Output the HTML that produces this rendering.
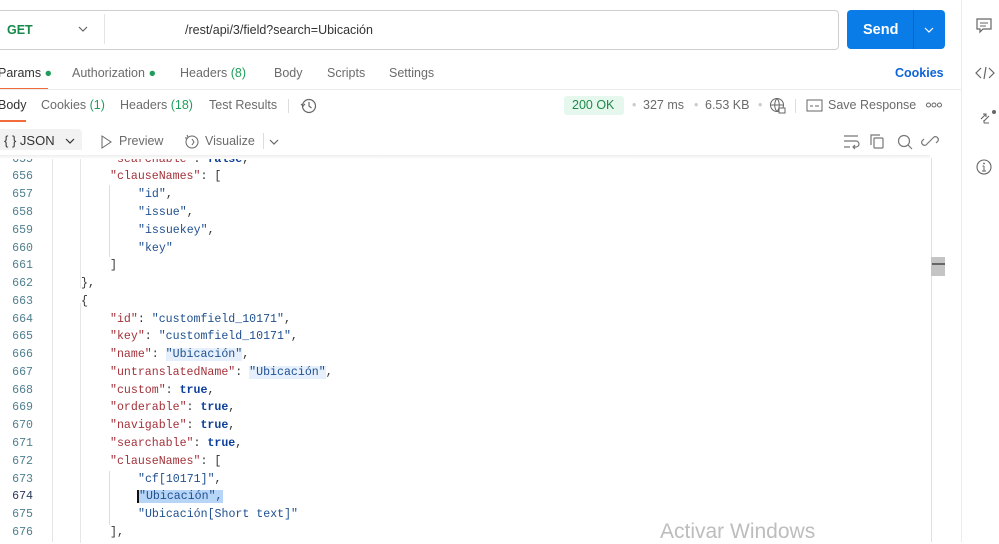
<!DOCTYPE html>
<html><head><meta charset="utf-8"><style>
*{margin:0;padding:0;box-sizing:border-box}
body{width:999px;height:542px;overflow:hidden;background:#fff;font-family:"Liberation Sans",sans-serif;position:relative;color:#6b6b6b}
.a{position:absolute;white-space:nowrap}
.t{font-size:12.5px}
.code{font-family:"Liberation Mono",monospace;font-size:11.6px}
.ln{position:absolute;left:0;width:33px;text-align:right;color:#4f7f8f;font-family:"Liberation Mono",monospace;font-size:11.6px}
.k{color:#a3323a}.s{color:#1f4f8f}.b{color:#0b3f9a;font-weight:bold}.p{color:#333}
.hl{background:#e5f0fc}
.g{color:#1e9e5a}
svg{position:absolute}
.cw{position:absolute;left:0;top:1px;width:930px;height:542px}
</style></head><body>
<div class="a" style="left:-5px;top:10px;width:844px;height:40px;border:1px solid #cfcfcf;border-radius:4px"></div>
<div class="a" style="left:104px;top:14px;width:1px;height:30px;background:#e4e4e4"></div>
<div class="a" style="left:7px;top:23px;font-size:12.5px;font-weight:bold;color:#158a4a">GET</div>
<svg style="left:78px;top:25px" width="10" height="8"><path d="M1 2l4 4 4-4" stroke="#666" fill="none" stroke-width="1.2"/></svg>
<div class="a" style="left:185px;top:23px;font-size:12.5px;color:#333">/rest/api/3/field?search=Ubicación</div>
<div class="a" style="left:847px;top:10px;width:98px;height:39px;background:#0a7ce8;border-radius:4px"></div>
<div class="a" style="left:913px;top:10px;width:1px;height:39px;background:#0668c5"></div>
<div class="a" style="left:863px;top:22px;font-size:14.5px;font-weight:bold;color:#fff">Send</div>
<svg style="left:924px;top:26px" width="10" height="8"><path d="M1 2l4 4 4-4" stroke="#fff" fill="none" stroke-width="1.2"/></svg>
<div class="a t" style="left:-2px;top:66px;color:#333">Params <span class="g">●</span></div>
<div class="a" style="left:0;top:88px;width:48px;height:2px;background:#f26b3a"></div>
<div class="a t" style="left:72px;top:66px">Authorization <span class="g">●</span></div>
<div class="a t" style="left:180px;top:66px">Headers <span class="g">(8)</span></div>
<div class="a t" style="left:274px;top:66px">Body</div>
<div class="a t" style="left:327px;top:66px">Scripts</div>
<div class="a t" style="left:389px;top:66px">Settings</div>
<div class="a t" style="left:895px;top:66px;color:#0d64d8;font-weight:bold">Cookies</div>
<div class="a" style="left:0;top:89px;width:961px;height:1px;background:#ececec"></div>
<div class="a t" style="left:-2px;top:98px;color:#333">Body</div>
<div class="a" style="left:0;top:120px;width:26px;height:2px;background:#f26b3a"></div>
<div class="a t" style="left:41px;top:98px">Cookies <span class="g">(1)</span></div>
<div class="a t" style="left:120px;top:98px">Headers <span class="g">(18)</span></div>
<div class="a t" style="left:209px;top:98px">Test Results</div>
<div class="a" style="left:288px;top:99px;width:1px;height:14px;background:#ddd"></div>
<svg style="left:300px;top:97px" width="18" height="18"><circle cx="9" cy="9" r="6.5" stroke="#666" fill="none" stroke-width="1.2"/><path d="M9 5v4l2.5 2" stroke="#666" fill="none" stroke-width="1.2"/><path d="M1 7l2 2 2-2" stroke="#666" fill="none" stroke-width="1.2"/></svg>
<div class="a" style="left:564px;top:96px;width:60px;height:19px;background:#e6f8ee;border-radius:3px"></div>
<div class="a t" style="left:572px;top:98px;color:#1e8a4a">200 OK</div>
<div class="a t" style="left:632px;top:98px;color:#ccc">•</div>
<div class="a t" style="left:643px;top:98px">327 ms</div>
<div class="a t" style="left:694px;top:98px;color:#ccc">•</div>
<div class="a t" style="left:705px;top:98px">6.53 KB</div>
<div class="a t" style="left:758px;top:98px;color:#ccc">•</div>
<svg style="left:769px;top:97px" width="18" height="18"><circle cx="8" cy="8" r="6.5" stroke="#666" fill="none"/><path d="M1.5 8h13M8 1.5c-3 3-3 10 0 13M8 1.5c3 3 3 10 0 13" stroke="#666" fill="none"/><rect x="10" y="11" width="6" height="5" fill="#fff" stroke="#666"/></svg>
<div class="a" style="left:795px;top:99px;width:1px;height:14px;background:#ddd"></div>
<svg style="left:806px;top:99px" width="18" height="14"><rect x="1" y="1" width="15" height="11" stroke="#666" fill="none"/><path d="M4 7h3M9 7h4" stroke="#666"/></svg>
<div class="a t" style="left:828px;top:98px">Save Response</div>
<svg style="left:926px;top:102px" width="16" height="6"><circle cx="2.5" cy="3" r="2" stroke="#666" fill="none"/><circle cx="8" cy="3" r="2" stroke="#666" fill="none"/><circle cx="13.5" cy="3" r="2" stroke="#666" fill="none"/></svg>
<div class="a" style="left:-5px;top:129px;width:87px;height:24px;background:#f2f2f2;border-radius:4px"></div>
<div class="a" style="left:4px;top:133px;font-size:13px;color:#333">{ } JSON</div>
<svg style="left:65px;top:137px" width="10" height="8"><path d="M1 2l4 4 4-4" stroke="#333" fill="none" stroke-width="1.2"/></svg>
<svg style="left:100px;top:135px" width="12" height="14"><path d="M2 1l9 6-9 6z" stroke="#666" fill="none"/></svg>
<div class="a t" style="left:119px;top:134px">Preview</div>
<svg style="left:183px;top:133px" width="17" height="17"><circle cx="9" cy="9" r="6" stroke="#666" fill="none"/><path d="M4 2l1 2M2 5l2 0M9 6l2 3-2 3" stroke="#666" fill="none"/></svg>
<div class="a t" style="left:205px;top:134px">Visualize</div>
<div class="a" style="left:263px;top:133px;width:1px;height:16px;background:#ddd"></div>
<svg style="left:269px;top:138px" width="10" height="8"><path d="M1 2l4 4 4-4" stroke="#666" fill="none" stroke-width="1.2"/></svg>
<svg style="left:842px;top:133px;width:100px" width="100" height="18">
<path d="M2 3h14M2 8h12a3 3 0 010 6h-3M13 12l-2 2 2 2M2 14h6" stroke="#777" fill="none" stroke-width="1.2"/>
<rect x="32" y="5" width="9" height="10" rx="1" stroke="#777" fill="none" stroke-width="1.2"/><path d="M29 12V2h9" stroke="#777" fill="none" stroke-width="1.2"/>
<circle cx="62" cy="8" r="5.5" stroke="#777" fill="none" stroke-width="1.2"/><path d="M66 12l4 4" stroke="#777" stroke-width="1.2"/>
<path d="M86 10l-2 2a3 3 0 01-4-4l2-2M90 6l2-2a3 3 0 014 4l-2 2M85 11l6-6" stroke="#777" fill="none" stroke-width="1.2"/>
</svg>
<div class="a" style="left:52px;top:158px;width:1px;height:384px;background:#e6e6e6"></div>
<div class="a" style="left:80px;top:158px;width:1px;height:130px;background:#e6e6e6"></div>
<div class="a" style="left:80px;top:303px;width:1px;height:240px;background:#e6e6e6"></div>
<div class="a" style="left:109px;top:185px;width:1px;height:72px;background:#ddd"></div>
<div class="a" style="left:109px;top:471px;width:1px;height:54px;background:#ddd"></div>
<div class="a" style="left:931px;top:158px;width:1px;height:384px;background:#e0e0e0"></div>
<div class="a" style="left:931px;top:257px;width:14px;height:19px;background:#c4c4c4"></div>
<div class="a" style="left:932px;top:263px;width:13px;height:2px;background:#666"></div>
<div class="a" style="left:961px;top:0;width:1px;height:542px;background:#ececec"></div>
<div class="cw">
<div class="ln" style="top:152px">655</div><div class="a code" style="left:110px;top:152px"><span class="k">"searchable"</span><span class="p">: </span><span class="b">false</span><span class="p">,</span></div>
<div class="ln" style="top:169px">656</div><div class="a code" style="left:110px;top:169px"><span class="k">"clauseNames"</span><span class="p">: [</span></div>
<div class="ln" style="top:187px">657</div><div class="a code" style="left:138px;top:187px"><span class="s">"id"</span><span class="p">,</span></div>
<div class="ln" style="top:205px">658</div><div class="a code" style="left:138px;top:205px"><span class="s">"issue"</span><span class="p">,</span></div>
<div class="ln" style="top:223px">659</div><div class="a code" style="left:138px;top:223px"><span class="s">"issuekey"</span><span class="p">,</span></div>
<div class="ln" style="top:241px">660</div><div class="a code" style="left:138px;top:241px"><span class="s">"key"</span></div>
<div class="ln" style="top:258px">661</div><div class="a code p" style="left:110px;top:258px">]</div>
<div class="ln" style="top:276px">662</div><div class="a code p" style="left:81px;top:276px">},</div>
<div class="ln" style="top:294px">663</div><div class="a code p" style="left:81px;top:294px">{</div>
<div class="ln" style="top:312px">664</div><div class="a code" style="left:110px;top:312px"><span class="k">"id"</span><span class="p">: </span><span class="s">"customfield_10171"</span><span class="p">,</span></div>
<div class="ln" style="top:329px">665</div><div class="a code" style="left:110px;top:329px"><span class="k">"key"</span><span class="p">: </span><span class="s">"customfield_10171"</span><span class="p">,</span></div>
<div class="ln" style="top:347px">666</div><div class="a code" style="left:110px;top:347px"><span class="k">"name"</span><span class="p">: </span><span class="s hl">"Ubicación"</span><span class="p">,</span></div>
<div class="ln" style="top:365px">667</div><div class="a code" style="left:110px;top:365px"><span class="k">"untranslatedName"</span><span class="p">: </span><span class="s hl">"Ubicación"</span><span class="p">,</span></div>
<div class="ln" style="top:383px">668</div><div class="a code" style="left:110px;top:383px"><span class="k">"custom"</span><span class="p">: </span><span class="b">true</span><span class="p">,</span></div>
<div class="ln" style="top:400px">669</div><div class="a code" style="left:110px;top:400px"><span class="k">"orderable"</span><span class="p">: </span><span class="b">true</span><span class="p">,</span></div>
<div class="ln" style="top:418px">670</div><div class="a code" style="left:110px;top:418px"><span class="k">"navigable"</span><span class="p">: </span><span class="b">true</span><span class="p">,</span></div>
<div class="ln" style="top:436px">671</div><div class="a code" style="left:110px;top:436px"><span class="k">"searchable"</span><span class="p">: </span><span class="b">true</span><span class="p">,</span></div>
<div class="ln" style="top:454px">672</div><div class="a code" style="left:110px;top:454px"><span class="k">"clauseNames"</span><span class="p">: [</span></div>
<div class="ln" style="top:472px">673</div><div class="a code" style="left:138px;top:472px"><span class="s">"cf[10171]"</span><span class="p">,</span></div>
<div class="ln" style="top:489px;color:#2a3a5a">674</div><div class="a code" style="left:137px;top:489px;border-left:2px solid #111"><span class="s" style="background:#b7d5f7">"Ubicación",</span></div>
<div class="ln" style="top:507px">675</div><div class="a code" style="left:138px;top:507px"><span class="s">"Ubicación[Short text]"</span></div>
<div class="ln" style="top:525px">676</div><div class="a code p" style="left:110px;top:525px">],</div>
</div>
<div class="a" style="left:0;top:150px;width:930px;height:9px;background:#fff"></div>
<div class="a" style="left:0;top:155px;width:930px;height:4px;background:linear-gradient(#eee,#fff)"></div>
<div class="a" style="left:660px;top:520px;font-size:21px;color:#bdbdbd">Activar Windows</div>
<svg style="left:975px;top:17px" width="18" height="18"><path d="M2 2h14v10H8l-3 3v-3H2z" stroke="#666" fill="none" stroke-width="1.2"/><path d="M5 6h8M5 9h6" stroke="#666"/></svg>
<svg style="left:975px;top:65px" width="20" height="16"><path d="M6 3L1 8l5 5M14 3l5 5-5 5M11 2L9 14" stroke="#666" fill="none" stroke-width="1.2"/></svg>
<svg style="left:978px;top:108px" width="20" height="20"><path d="M3 11l5-5M5 6h3v3M11 15l-5 0M6 12v3M11 8l-5 5" stroke="#666" fill="none" stroke-width="1.1"/><circle cx="16" cy="4" r="2" fill="#666"/></svg>
<svg style="left:975px;top:158px" width="18" height="18"><circle cx="9" cy="9" r="7" stroke="#666" fill="none" stroke-width="1.1"/><path d="M9 8v5M7 13h4M7.5 8H9" stroke="#666"/><circle cx="9" cy="5.5" r="0.9" fill="#666"/></svg>
</body></html>
